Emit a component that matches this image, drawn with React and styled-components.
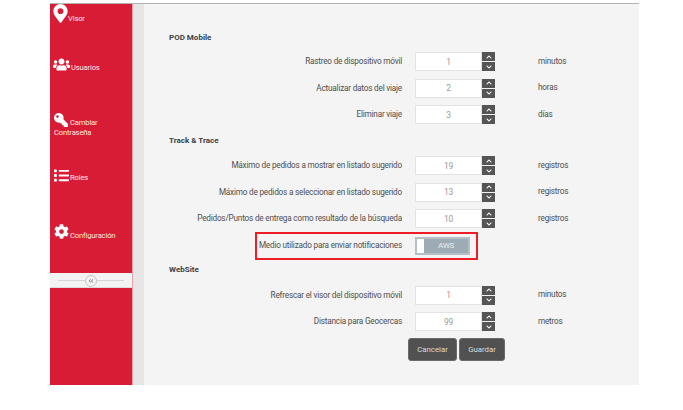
import React from "react";
import styled, { createGlobalStyle } from "styled-components";
import { FaMapMarkerAlt, FaUsers, FaKey, FaList, FaCog, FaChevronUp, FaChevronDown, FaAngleDoubleLeft } from "react-icons/fa";

const Global = createGlobalStyle`
  html, body { margin: 0; padding: 0; background: #fff; width: 683px; height: 410px; overflow: hidden; }
  body { font-family: Roboto, "Liberation Sans", sans-serif; }
`;
const Page = styled.div`
  width: 589px; height: 382px; margin: 3px 0 0 50px;
  display: flex; border-top: 1px solid #b5b2ae; box-sizing: border-box;
`;
const Sidebar = styled.nav`
  width: 83px; height: 100%; background: #d91c35; border-right: 1px solid #e9a0aa;
  box-sizing: border-box; display: flex; flex-direction: column; color: #fbe6e9; flex: none;
`;
const NavItem = styled.div`
  height: ${p => p.$h}px; padding: ${p => p.$top}px 0 0 ${p => p.$left}px; box-sizing: border-box;
  font-size: 7.6px; letter-spacing: -0.15px; line-height: 10px; flex: none;
  svg { color: #fff; display: inline-block; vertical-align: ${p => p.$align || 0}px; margin-right: ${p => p.$gap ?? 2}px; }
`;
const KeyIcon = styled(FaKey)`
  transform: scaleX(-1);
`;
const Collapse = styled.div`
  height: 15px; background: #f3f3f3; border-bottom: 1px solid #ddd; box-sizing: border-box;
  display: flex; align-items: center; justify-content: center; position: relative; flex: none;
  &::before { content: ""; width: 66px; height: 1px; background: #d6d6d6; }
`;
const CollapseKnob = styled.span`
  position: absolute; left: 35px; top: 2px; width: 10px; height: 10px; border-radius: 50%;
  background: #f3f3f3; border: 1px solid #c6c6c6; display: flex; align-items: center; justify-content: center;
  color: #999; font-size: 6px;
`;
const Strip = styled.div`
  width: 11px; background: #e6e6e6; flex: none;
`;
const Content = styled.main`
  flex: 1; background: #f4f4f4; padding-top: 28px; box-sizing: border-box;
`;
const Heading = styled.h3`
  margin: ${p => p.$mt || 0}px 0 ${p => p.$mb || 0}px 25px; font-size: 8px; line-height: 11px; font-weight: 700; color: #3c4148;
`;
const Row = styled.div`
  position: relative; display: grid; grid-template-columns: 258px 80px 1fr; column-gap: 13px;
  align-items: center; height: ${p => p.$h || 26.6}px; font-size: 8.2px; letter-spacing: -0.2px; color: #4e4e4e;
`;
const Label = styled.label`
  text-align: right; position: relative; top: -1px; white-space: nowrap;
`;
const Unit = styled.span`
  padding-left: 30px; position: relative; top: -1.5px;
`;
const Spinner = styled.div`
  display: flex; width: 80px; height: 20px;
`;
const Input = styled.div`
  width: 67px; height: 19px; background: #fff; border: 1px solid #e3e3e3; box-sizing: border-box;
  display: flex; align-items: center; justify-content: center; color: ${p => p.$alert ? "#c98a90" : "#9a9a9a"}; font-size: 8.5px;
`;
const Steppers = styled.div`
  display: flex; flex-direction: column; gap: 1px; width: 13px; height: 19px;
`;
const Step = styled.button`
  flex: 1; padding: 0; border: 0; background: #555; color: #fff; display: flex; align-items: center; justify-content: center; font-size: 6px;
`;
const Toggle = styled.div`
  width: 55px; height: 18px; border: 2px solid #b4c0c7; box-sizing: border-box; display: flex; background: #9dabb5;
`;
const Knob = styled.span`
  width: 7px; background: #fff; flex: none;
`;
const ToggleText = styled.span`
  flex: 1; display: flex; align-items: center; justify-content: center; color: #e9edf0; font-size: 8px;
`;
const Highlight = styled.div`
  position: absolute; left: 111px; top: -1px; width: 223px; height: 28px; border: 2px solid #ee1c25; box-sizing: border-box;
`;
const Actions = styled.div`
  display: flex; gap: 2px; padding-left: 264px; margin-top: 2px;
`;
const Btn = styled.button`
  width: ${p => p.$w}px; height: 23px; background: #515151; border: 1px solid #6a6a6a; border-radius: 3px;
  color: #dcdcdc; font: 7.8px Roboto, "Liberation Sans", sans-serif; padding: 0;
`;

const Num = ({ value, alert }) => (
  <Spinner>
    <Input $alert={alert}>{value}</Input>
    <Steppers>
      <Step><FaChevronUp /></Step>
      <Step><FaChevronDown /></Step>
    </Steppers>
  </Spinner>
);
const Field = ({ label, value, unit, alert }) => (
  <Row>
    <Label>{label}</Label>
    <Num value={value} alert={alert} />
    <Unit>{unit}</Unit>
  </Row>
);

export default function App() {
  return (
    <>
      <Global />
      <Page>
        <Sidebar>
          <NavItem $h={49} $top={0} $left={1} $align={-2} $gap={-2}>
            <FaMapMarkerAlt size={19} />Visor
          </NavItem>
          <NavItem $h={54} $top={3} $left={3} $align={-3} $gap={1}>
            <FaUsers size={17} />Usuarios
          </NavItem>
          <NavItem $h={55} $top={6} $left={4} $align={-2}>
            <KeyIcon size={14} />Cambiar<br />Contraseña
          </NavItem>
          <NavItem $h={57} $top={6} $left={4} $align={-3} $gap={1}>
            <FaList size={15} />Roles
          </NavItem>
          <NavItem $h={54} $top={5} $left={4} $align={-1} $gap={1}>
            <FaCog size={15} />Configuración
          </NavItem>
          <Collapse>
            <CollapseKnob><FaAngleDoubleLeft /></CollapseKnob>
          </Collapse>
        </Sidebar>
        <Strip />
        <Content>
          <Heading $mb={6}>POD Mobile</Heading>
          <Field label="Rastreo de dispositivo móvil" value="1" unit="minutos" />
          <Field label="Actualizar datos del viaje" value="2" unit="horas" />
          <Field label="Eliminar viaje" value="3" unit="días" />
          <Heading $mt={6} $mb={7}>Track &amp; Trace</Heading>
          <Field label="Máximo de pedidos a mostrar en listado sugerido" value="19" unit="registros" />
          <Field label="Máximo de pedidos a seleccionar en listado sugerido" value="13" unit="registros" />
          <Field label="Pedidos/Puntos de entrega como resultado de la búsqueda" value="10" unit="registros" />
          <Row $h={26}>
            <Label>Medio utilizado para enviar notificaciones</Label>
            <Toggle><Knob /><ToggleText>AWS</ToggleText></Toggle>
            <Highlight />
          </Row>
          <Heading $mt={5} $mb={8}>WebSite</Heading>
          <Field label="Refrescar el visor del dispositivo móvil" value="1" unit="minutos" alert />
          <Field label="Distancia para Geocercas" value="99" unit="metros" />
          <Actions>
            <Btn $w={49}>Cancelar</Btn>
            <Btn $w={46}>Guardar</Btn>
          </Actions>
        </Content>
      </Page>
    </>
  );
}
